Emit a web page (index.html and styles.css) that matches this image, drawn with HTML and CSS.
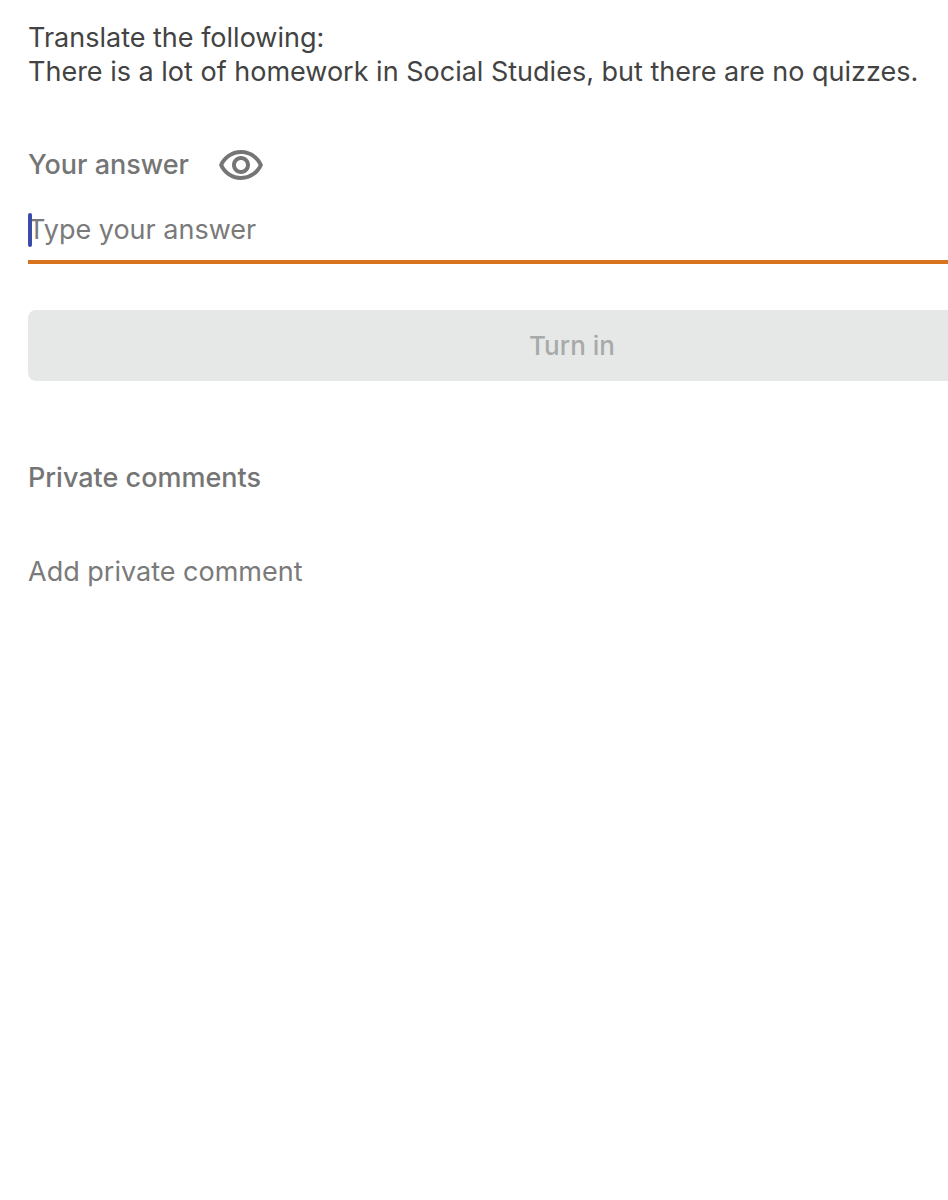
FILE: index.html
```html
<!DOCTYPE html>
<html lang="en">
<head>
<meta charset="UTF-8">
<meta name="viewport" content="width=device-width, initial-scale=1.0">
<title>Translate the following</title>
<link rel="stylesheet" href="styles.css">
</head>
<body>
  <main class="question">
    <p class="prompt">Translate the following:<br>There is a lot of homework in Social Studies, but there are no quizzes.</p>

    <form class="answer-form">
      <div class="answer-header">
        <label class="heading" for="answer">Your answer</label>
        <svg class="eye" viewBox="1 4 22 15" role="img" aria-label="Visible to classmates">
          <path d="M12 6c3.790 0 7.170 2.130 8.820 5.500C19.170 14.870 15.790 17 12 17s-7.170-2.130-8.820-5.500C4.830 8.130 8.210 6 12 6m0-2C7 4 2.730 7.110 1 11.500 2.730 15.890 7 19 12 19s9.270-3.110 11-7.500C21.270 7.110 17 4 12 4zm0 5c1.380 0 2.500 1.120 2.500 2.500S13.380 14 12 14s-2.500-1.120-2.500-2.500S10.620 9 12 9m0-2c-2.480 0-4.500 2.020-4.500 4.500S9.520 16 12 16s4.500-2.020 4.500-4.500S14.480 7 12 7z"/>
        </svg>
      </div>
      <div class="answer-field">
        <input type="text" id="answer" class="answer-input" placeholder="Type your answer" autocomplete="off">
        <span class="caret"></span>
      </div>
      <button type="submit" class="turn-in" disabled>Turn in</button>
    </form>

    <section class="comments">
      <h2 class="heading">Private comments</h2>
      <input type="text" class="comment-input" placeholder="Add private comment" aria-label="Add private comment">
    </section>
  </main>
</body>
</html>
```
FILE: styles.css
```css
* {
  box-sizing: border-box;
}

body {
  margin: 0;
  background: #fff;
  font-family: Inter, sans-serif;
  font-size: 27px;
}

.question {
  padding: 21px 0 21px 28px;
  overflow: hidden;
}

.prompt {
  margin: 0 0 58px;
  color: #434343;
  line-height: 34px;
}

.heading {
  margin: 0;
  color: #757575;
  font-size: 27px;
  font-weight: 500;
  line-height: 36px;
}

/* The form runs past the right edge of the window */
.answer-form {
  display: flex;
  flex-direction: column;
  margin-right: -168px;
}

.answer-header {
  display: flex;
  align-items: center;
  gap: 30px;
}

.eye {
  width: 44px;
  height: 30px;
  fill: #757575;
}

input {
  display: block;
  width: 100%;
  padding: 0;
  border: none;
  outline: none;
  background: transparent;
  color: #434343;
  font: inherit;
}

input::placeholder {
  color: #7a7a7a;
  opacity: 1;
}

.answer-field {
  position: relative;
  margin-top: 27px;
}

.answer-input {
  height: 54px;
  padding-bottom: 12px;
  border-bottom: 4px solid #d8731f;
  caret-color: transparent;
}

/* Thick text cursor over the start of the field */
.caret {
  position: absolute;
  top: 3px;
  left: 0;
  width: 4px;
  height: 34px;
  border-radius: 2px;
  background: #3c4ba8;
}

.turn-in {
  height: 71px;
  margin-top: 46px;
  border: none;
  border-radius: 8px;
  background: #e6e8e7;
  color: #a8aaa9;
  font: inherit;
  font-size: 26px;
  font-weight: 500;
}

.comments {
  margin-top: 79px;
}

.comment-input {
  height: 40px;
  margin-top: 55px;
}
```
